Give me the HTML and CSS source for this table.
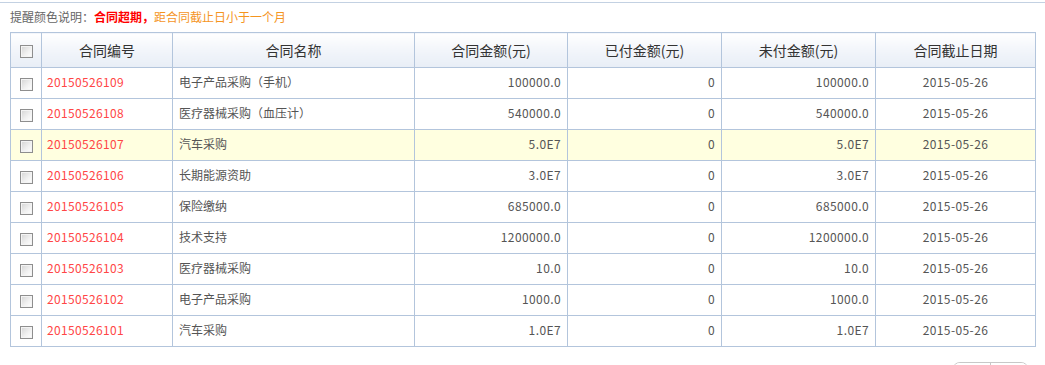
FILE: index.html
```html
<!DOCTYPE html>
<html lang="zh-CN">
<head>
<meta charset="utf-8">
<link rel="stylesheet" href="styles.css">
</head>
<body>
<div class="page">
  <div class="legend">提醒颜色说明：<span class="overdue">合同超期，</span><span class="soon">距合同截止日小于一个月</span></div>
  <table class="grid">
    <colgroup>
      <col class="c-chk"><col class="c-id"><col class="c-name"><col class="c-amt"><col class="c-paid"><col class="c-unpaid"><col class="c-date">
    </colgroup>
    <thead>
      <tr>
        <th><span class="chk"></span></th>
        <th>合同编号</th>
        <th>合同名称</th>
        <th>合同金额(元)</th>
        <th>已付金额(元)</th>
        <th>未付金额(元)</th>
        <th>合同截止日期</th>
      </tr>
    </thead>
    <tbody>
      <tr><td class="tc"><span class="chk"></span></td><td class="id">20150526109</td><td>电子产品采购（手机）</td><td class="num">100000.0</td><td class="num">0</td><td class="num">100000.0</td><td class="tc dt">2015-05-26</td></tr>
      <tr><td class="tc"><span class="chk"></span></td><td class="id">20150526108</td><td>医疗器械采购（血压计）</td><td class="num">540000.0</td><td class="num">0</td><td class="num">540000.0</td><td class="tc dt">2015-05-26</td></tr>
      <tr class="hl"><td class="tc"><span class="chk"></span></td><td class="id">20150526107</td><td>汽车采购</td><td class="num">5.0E7</td><td class="num">0</td><td class="num">5.0E7</td><td class="tc dt">2015-05-26</td></tr>
      <tr><td class="tc"><span class="chk"></span></td><td class="id">20150526106</td><td>长期能源资助</td><td class="num">3.0E7</td><td class="num">0</td><td class="num">3.0E7</td><td class="tc dt">2015-05-26</td></tr>
      <tr><td class="tc"><span class="chk"></span></td><td class="id">20150526105</td><td>保险缴纳</td><td class="num">685000.0</td><td class="num">0</td><td class="num">685000.0</td><td class="tc dt">2015-05-26</td></tr>
      <tr><td class="tc"><span class="chk"></span></td><td class="id">20150526104</td><td>技术支持</td><td class="num">1200000.0</td><td class="num">0</td><td class="num">1200000.0</td><td class="tc dt">2015-05-26</td></tr>
      <tr><td class="tc"><span class="chk"></span></td><td class="id">20150526103</td><td>医疗器械采购</td><td class="num">10.0</td><td class="num">0</td><td class="num">10.0</td><td class="tc dt">2015-05-26</td></tr>
      <tr><td class="tc"><span class="chk"></span></td><td class="id">20150526102</td><td>电子产品采购</td><td class="num">1000.0</td><td class="num">0</td><td class="num">1000.0</td><td class="tc dt">2015-05-26</td></tr>
      <tr><td class="tc"><span class="chk"></span></td><td class="id">20150526101</td><td>汽车采购</td><td class="num">1.0E7</td><td class="num">0</td><td class="num">1.0E7</td><td class="tc dt">2015-05-26</td></tr>
    </tbody>
  </table>
  <div class="pager-row">
    <div class="pager"><span class="pg"></span><span class="pg"></span></div>
  </div>
</div>
</body>
</html>
```

FILE: styles.css
```css
html, body {
  margin: 0;
  padding: 0;
  background: #fff;
}
body {
  font-family: "Noto Sans CJK SC", "Microsoft YaHei", sans-serif;
  font-size: 12px;
  color: #555;
}
.page {
  margin-top: 2px;
  border-top: 1px solid #c3d1e2;
  width: 1045px;
}
.legend {
  height: 29px;
  line-height: 27px;
  padding-left: 10px;
  color: #666;
}
.legend .overdue {
  color: #f00;
  font-weight: bold;
}
.legend .soon {
  color: #f5951f;
}
.grid {
  margin-left: 10px;
  width: 1026px;
  border-collapse: collapse;
  table-layout: fixed;
}
.c-chk { width: 31px; }
.c-id { width: 131px; }
.c-name { width: 242px; }
.c-amt { width: 153px; }
.c-paid { width: 154px; }
.c-unpaid { width: 154px; }
.c-date { width: 160px; }
.grid th, .grid td {
  border: 1px solid #b3c5dc;
  padding: 0 6px;
  white-space: nowrap;
  overflow: hidden;
}
.grid th {
  height: 34px;
  font-weight: normal;
  color: #333;
  font-size: 14px;
  text-align: center;
  background: linear-gradient(to bottom, #ffffff 0%, #f2f5fa 50%, #e8eef6 100%);
}
.grid td {
  height: 27px;
  padding-bottom: 3px;
  background: #fff;
}
.grid tr.hl td {
  background: #ffffe0;
}
.grid .tc { text-align: center; }
.grid .num { text-align: right; letter-spacing: 0.4px; }
.grid .dt { letter-spacing: 0.4px; }
.grid .id { color: #ff4646; letter-spacing: 0.35px; padding-left: 5px; }
.grid th:first-child, .grid td:first-child {
  padding: 0;
  text-align: center;
}
.chk {
  display: inline-block;
  width: 11px;
  height: 11px;
  border: 1px solid #8e8e8e;
  background: linear-gradient(135deg, #d4d4d4 0%, #f2f2f2 60%, #ffffff 100%);
  box-shadow: inset 0 0 0 1px #f4f4f4;
  vertical-align: middle;
  position: relative;
  top: -1px;
}
.pager-row {
  display: flex;
  justify-content: flex-end;
  padding-right: 16px;
  margin-top: 15px;
}
.pager {
  display: flex;
  border: 1px solid #c8c8c8;
  border-radius: 8px;
  overflow: hidden;
  height: 24px;
}
.pg {
  width: 37px;
  height: 24px;
  background: #fff;
}
.pg + .pg {
  border-left: 1px solid #c8c8c8;
}
```
